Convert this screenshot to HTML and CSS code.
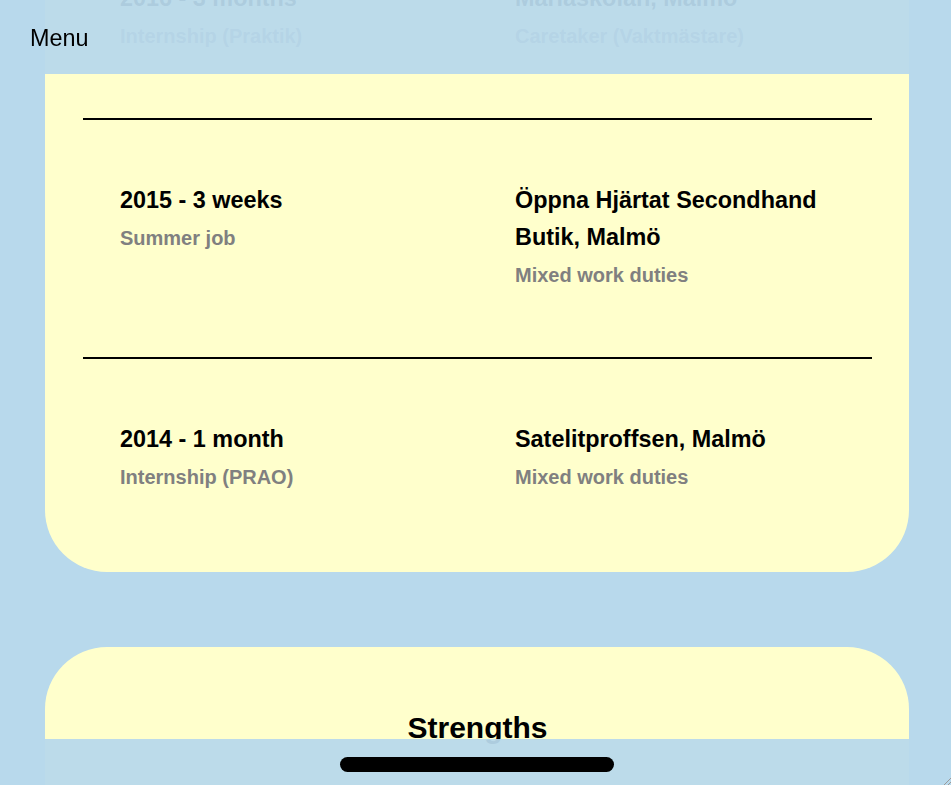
FILE: index.html
```html
<!DOCTYPE html>
<html lang="en">
<head>
<meta charset="utf-8">
<title>CV</title>
<link rel="stylesheet" href="styles.css">
</head>
<body>
<div class="menu-btn">Menu</div>
<div class="top-bar"></div>

<main class="page">
  <section class="card card-experience">
    <div class="entry">
      <div class="col">
        <h3>2016 - 3 months</h3>
        <p>Internship (Praktik)</p>
      </div>
      <div class="col">
        <h3>Mariaskolan, Malmö</h3>
        <p>Caretaker (Vaktmästare)</p>
      </div>
    </div>
    <div class="entry">
      <div class="col">
        <h3>2015 - 3 weeks</h3>
        <p>Summer job</p>
      </div>
      <div class="col">
        <h3>Öppna Hjärtat Secondhand Butik, Malmö</h3>
        <p>Mixed work duties</p>
      </div>
    </div>
    <div class="entry">
      <div class="col">
        <h3>2014 - 1 month</h3>
        <p>Internship (PRAO)</p>
      </div>
      <div class="col">
        <h3>Satelitproffsen, Malmö</h3>
        <p>Mixed work duties</p>
      </div>
    </div>
  </section>

  <section class="card card-strengths">
    <h2>Strengths</h2>
  </section>
</main>

<div class="bottom-bar"><span class="home-pill"></span></div>
<svg class="resize-grip" width="8" height="8" viewBox="0 0 8 8"><path d="M8 1 L1 8 M8 5 L5 8" stroke="#9a9a9a" stroke-width="1"/></svg>
</body>
</html>
```

FILE: styles.css
```css
html, body {
  margin: 0;
  padding: 0;
}

body {
  background: #b8d9ec;
  font-family: "Liberation Sans", Arial, sans-serif;
  font-size: 20px;
  color: #000;
  overflow: hidden;
  height: 785px;
}

.page {
  display: flex;
  flex-direction: column;
  gap: 75px;
  padding: 0 42px 0 45px;
}

.card {
  background: #ffffcc;
  border-radius: 62px;
}

.card-experience {
  margin-top: -82px;
  padding: 0 37px 13px 38px;
}

.entry {
  display: grid;
  grid-template-columns: 1fr 1fr;
  column-gap: 75px;
  padding: 62px 37px 63px;
}

.entry + .entry {
  border-top: 2px solid #000;
}

.entry h3 {
  margin: 0;
  font-size: 23.4px;
  line-height: 37px;
  font-weight: bold;
}

.entry p {
  margin: 0;
  font-size: 20px;
  line-height: 38px;
  font-weight: bold;
  color: #808080;
}

.card-strengths {
  padding: 62px 37px 400px 38px;
}

.card-strengths h2 {
  margin: 0;
  text-align: center;
  font-size: 30px;
  line-height: 37px;
  font-weight: bold;
}

.top-bar {
  position: fixed;
  top: 0;
  left: 45px;
  width: 864px;
  height: 74px;
  background: rgba(184, 217, 236, 0.94);
  z-index: 5;
}

.menu-btn {
  position: fixed;
  top: 0;
  left: 30px;
  font-size: 23.4px;
  line-height: 76px;
  z-index: 6;
}

.bottom-bar {
  position: fixed;
  bottom: 0;
  left: 45px;
  width: 864px;
  height: 46px;
  background: rgba(184, 217, 236, 0.94);
  display: flex;
  justify-content: center;
  align-items: flex-start;
  padding-top: 18px;
  box-sizing: border-box;
  z-index: 5;
}

.home-pill {
  display: block;
  width: 274px;
  height: 15px;
  border-radius: 8px;
  background: #000;
}

.resize-grip {
  position: fixed;
  right: 0;
  bottom: 0;
  z-index: 7;
}
```
